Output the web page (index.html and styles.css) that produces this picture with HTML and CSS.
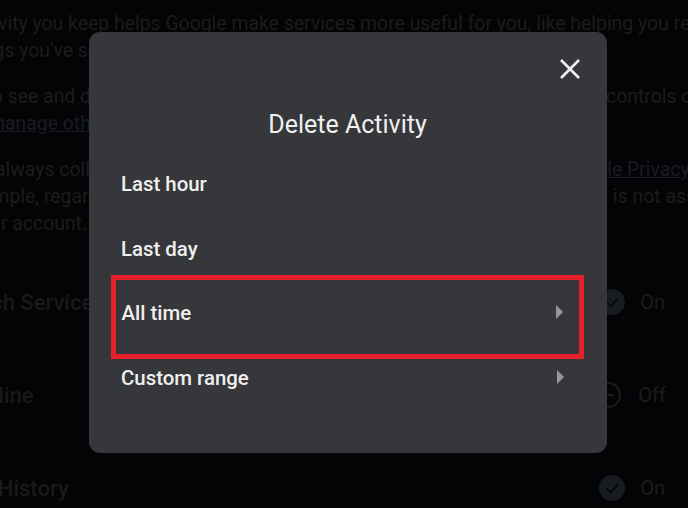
FILE: index.html
```html
<!DOCTYPE html>
<html lang="en">
<head>
<meta charset="utf-8">
<title>Delete Activity</title>
<link rel="stylesheet" href="styles.css">
</head>
<body>
<main class="page">
  <div class="copy">
    <p class="para"><span class="line">The activity you keep helps Google make services more useful for you, like helping you rediscover</span><span class="line">the things you've seen</span></p>
    <p class="para"><span class="line"><span class="lead lead-controls">You also see and delete your activity</span>controls on</span><span class="line"><a class="link">and to manage other activity</a></span></p>
    <p class="para"><span class="line"><span class="lead lead-privacy">Google always collects some data</span><a class="link">Google Privacy</a></span><span class="line"><span class="lead lead-assoc">For example, regardless of your settings</span>is not associated</span><span class="line">with your account.</span></p>
  </div>
  <div class="settings">
    <div class="setting"><span class="setting-name">Our Search Services</span><span class="state state-on"><svg class="state-icon" viewBox="0 0 26 26"><circle cx="13" cy="13" r="13" fill="#171c22"/><path d="M7.5 13.5l4 4 7.5-8" fill="none" stroke="#08090c" stroke-width="2"/></svg><span>On</span></span></div>
    <div class="setting"><span class="setting-name">The Timeline</span><span class="state state-off"><svg class="state-icon" viewBox="0 0 26 26"><circle cx="13" cy="13" r="12" fill="none" stroke="#1b1c1e" stroke-width="2"/><path d="M7 13h12" stroke="#1b1c1e" stroke-width="2"/></svg><span>Off</span></span></div>
    <div class="setting"><span class="setting-name">YouTube History</span><span class="state state-on"><svg class="state-icon" viewBox="0 0 26 26"><circle cx="13" cy="13" r="13" fill="#171c22"/><path d="M7.5 13.5l4 4 7.5-8" fill="none" stroke="#08090c" stroke-width="2"/></svg><span>On</span></span></div>
  </div>
</main>
<section class="dialog">
  <div class="dialog-top">
    <svg class="close" viewBox="0 0 20 20"><path d="M1 1l18 18M19 1L1 19" stroke="#f1f1f2" stroke-width="2.6" fill="none"/></svg>
  </div>
  <h1 class="dialog-title">Delete Activity</h1>
  <ul class="options">
    <li class="option">Last hour</li>
    <li class="option">Last day</li>
    <li class="option option-marked">All time<span class="arrow"></span></li>
    <li class="option">Custom range<span class="arrow"></span></li>
  </ul>
</section>
</body>
</html>
```
FILE: styles.css
```css
* { box-sizing: border-box; }
html, body { margin: 0; height: 100%; }
body {
  position: relative;
  width: 688px;
  height: 508px;
  overflow: hidden;
  background: #040406;
  font-family: Roboto, "Liberation Sans", sans-serif;
}
.page {
  display: flex;
  flex-direction: column;
  height: 508px;
  padding-top: 10px;
  margin-left: -71px;
  color: #1b1c1e;
  font-size: 19.4px;
}
.copy { display: flex; flex-direction: column; gap: 19px; }
.para { margin: 0; display: flex; flex-direction: column; }
.line { display: block; height: 27px; line-height: 27px; white-space: nowrap; }
.lead { display: inline-block; overflow: hidden; vertical-align: top; }
.lead-controls { width: 677px; }
.lead-privacy { width: 632px; }
.lead-assoc { width: 684px; }
.link { color: #181c24; text-decoration: underline; }
.settings { margin: 50px 0 0 -23px; display: flex; flex-direction: column; gap: 63px; width: 782px; }
.setting { display: flex; justify-content: space-between; align-items: center; height: 30px; }
.setting-name { font-size: 22px; font-weight: 500; color: #19191b; }
.state { display: flex; align-items: center; font-size: 20px; color: #1b1c1e; }
.state-on { padding-right: 23px; gap: 15px; }
.state-off { padding-right: 22px; gap: 17px; }
.state-icon { width: 26px; height: 26px; }
.dialog {
  position: absolute;
  left: 89px;
  top: 32px;
  width: 518px;
  height: 421px;
  padding: 0 23px 0 22px;
  background: #36373a;
  border-radius: 11px;
}
.dialog-top { display: flex; justify-content: flex-end; padding: 27px 4px 0 0; height: 47px; }
.close { width: 20px; height: 20px; }
.dialog-title {
  margin: 31px 0 0;
  font-size: 25px;
  line-height: 30px;
  font-weight: 400;
  text-align: center;
  color: #f0f0f1;
}
.options { list-style: none; margin: 11.5px 0 0; padding: 0; display: flex; flex-direction: column; }
.option {
  display: flex;
  align-items: center;
  justify-content: space-between;
  height: 65px;
  padding: 0 16px 0 6px;
  border: 4px solid transparent;
  font-size: 20.4px;
  font-weight: 500;
  color: #efeff0;
}
.option-marked { height: 84px; margin: -6.5px 0 -13.5px; padding: 0 16px 8px 5.5px; border: 5px solid #e8202c; position: relative; z-index: 1; }
.arrow {
  width: 0;
  height: 0;
  margin-bottom: 2px;
  border-left: 7px solid #97979b;
  border-top: 7px solid transparent;
  border-bottom: 7px solid transparent;
}
```
